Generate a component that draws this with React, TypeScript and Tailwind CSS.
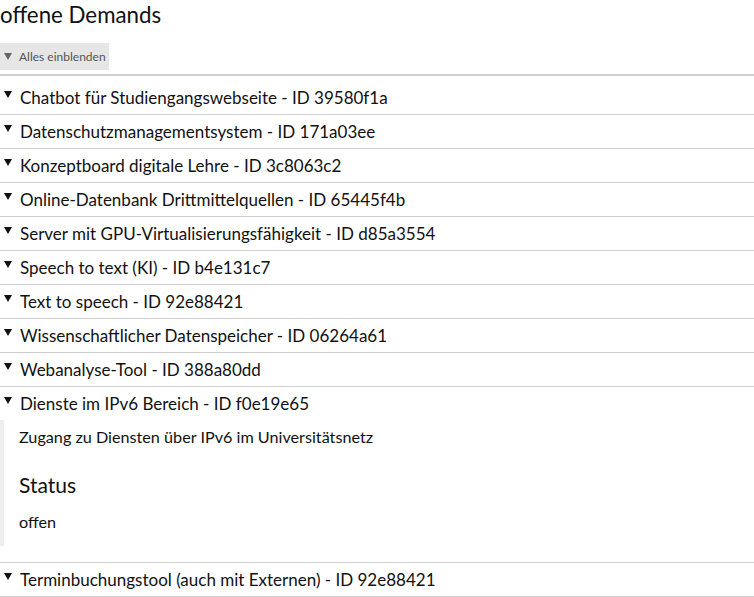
import { useState } from "react"

const demands = [
  { title: "Chatbot für Studiengangswebseite", id: "39580f1a" },
  { title: "Datenschutzmanagementsystem", id: "171a03ee" },
  { title: "Konzeptboard digitale Lehre", id: "3c8063c2" },
  { title: "Online-Datenbank Drittmittelquellen", id: "65445f4b" },
  { title: "Server mit GPU-Virtualisierungsfähigkeit", id: "d85a3554" },
  { title: "Speech to text (KI)", id: "b4e131c7" },
  { title: "Text to speech", id: "92e88421" },
  { title: "Wissenschaftlicher Datenspeicher", id: "06264a61" },
  { title: "Webanalyse-Tool", id: "388a80dd" },
  {
    title: "Dienste im IPv6 Bereich",
    id: "f0e19e65",
    description: "Zugang zu Diensten über IPv6 im Universitätsnetz",
    status: "offen",
  },
  { title: "Terminbuchungstool (auch mit Externen)", id: "92e88421" },
]

function Triangle({ className }: { className: string }) {
  return (
    <svg className={className} viewBox="0 0 8 7" fill="currentColor">
      <path d="M0 0h8L4 7z" />
    </svg>
  )
}

export default function App() {
  const [open, setOpen] = useState<string | null>("f0e19e65")

  return (
    <div className="min-h-screen bg-white text-[#111] font-['Lato','Noto_Sans',sans-serif]">
      <h1 className="text-[22.3px] leading-[30px] font-normal">offene Demands</h1>

      <button className="mt-[13px] flex h-[27px] w-[109px] items-center gap-[7px] bg-[#e6e6e6] pl-[4px] text-[12px] text-[#555]">
        <Triangle className="h-[7px] w-[8px] text-[#666]" />
        Alles einblenden
      </button>

      <div className="mt-[4px] border-t-2 border-[#cfcfcf] pt-[5px]">
        {demands.map((d) => {
          const isOpen = open === d.id && !!d.description
          return (
            <div key={d.title} className={`border-b border-[#cfcfcf] ${isOpen ? "pb-[16px]" : ""}`}>
              <div
                className="flex h-[33px] cursor-pointer items-center gap-[8px] pl-[4px] text-[17px]"
                onClick={() => setOpen(isOpen ? null : d.id)}
              >
                <Triangle className="mb-[6px] h-[7px] w-[8px]" />
                <span>
                  {d.title} - ID {d.id}
                </span>
              </div>
              {isOpen && (
                <div className="border-l-4 border-[#eeeeee] pl-[15px] pt-[4px] pb-[11px]">
                  <p className="text-[16.2px] leading-[26px]">{d.description}</p>
                  <h3 className="mt-[20px] text-[21px] leading-[30px]">Status</h3>
                  <p className="mt-[9px] text-[16.2px] leading-[26px]">{d.status}</p>
                </div>
              )}
            </div>
          )
        })}
      </div>
    </div>
  )
}
